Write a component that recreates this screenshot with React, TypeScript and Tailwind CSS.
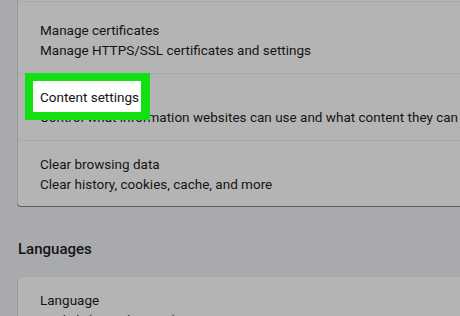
export default function App() {
  return (
    <div
      className="relative w-[460px] h-[316px] overflow-hidden bg-[#a9aaad] text-[#141414]"
      style={{ fontFamily: "Roboto, 'Liberation Sans', sans-serif" }}
    >
      {/* Advanced card */}
      <div className="ml-[17px] -mt-[20px] w-[480px] rounded-b-[4px] border-l border-[#9c9c9e] bg-[#b4b4b4] shadow-[0_1px_0_#5c5c5c]">
        <div className="h-[21px]" />
        <div className="h-[72px] border-t border-[#a9a9a9] pl-[22px] pt-[18px] text-[13.5px] leading-[20px]">
          <p>Manage certificates</p>
          <p>Manage HTTPS/SSL certificates and settings</p>
        </div>
        <div className="relative h-[67px] border-t border-[#a9a9a9] pl-[22px] pt-[13px] text-[13.5px] leading-[20px]">
          <p className="relative z-10">Content settings</p>
          <p className="whitespace-nowrap">
            Control what information websites can use and what content they can show you
          </p>
          {/* highlight */}
          <div className="absolute left-[7px] top-[-1px] z-0 h-[47px] w-[125px] bg-[#12e012] p-[8px]">
            <div className="h-[31px] w-[108px] bg-white" />
          </div>
        </div>
        <div className="h-[66px] border-t border-[#a9a9a9] pl-[22px] pt-[13px] text-[13.5px] leading-[20px]">
          <p>Clear browsing data</p>
          <p>Clear history, cookies, cache, and more</p>
        </div>
      </div>

      {/* Languages */}
      <h2 className="ml-[18px] mt-[33px] text-[15px] font-medium leading-[20px]">Languages</h2>
      <div className="ml-[17px] mt-[18px] w-[480px] rounded-t-[4px] border-l border-[#9c9c9e] bg-[#b4b4b4] pl-[22px] pt-[13px] text-[13.5px] leading-[20px]">
        <p>Language</p>
        <p>English (United States)</p>
      </div>
    </div>
  );
}
